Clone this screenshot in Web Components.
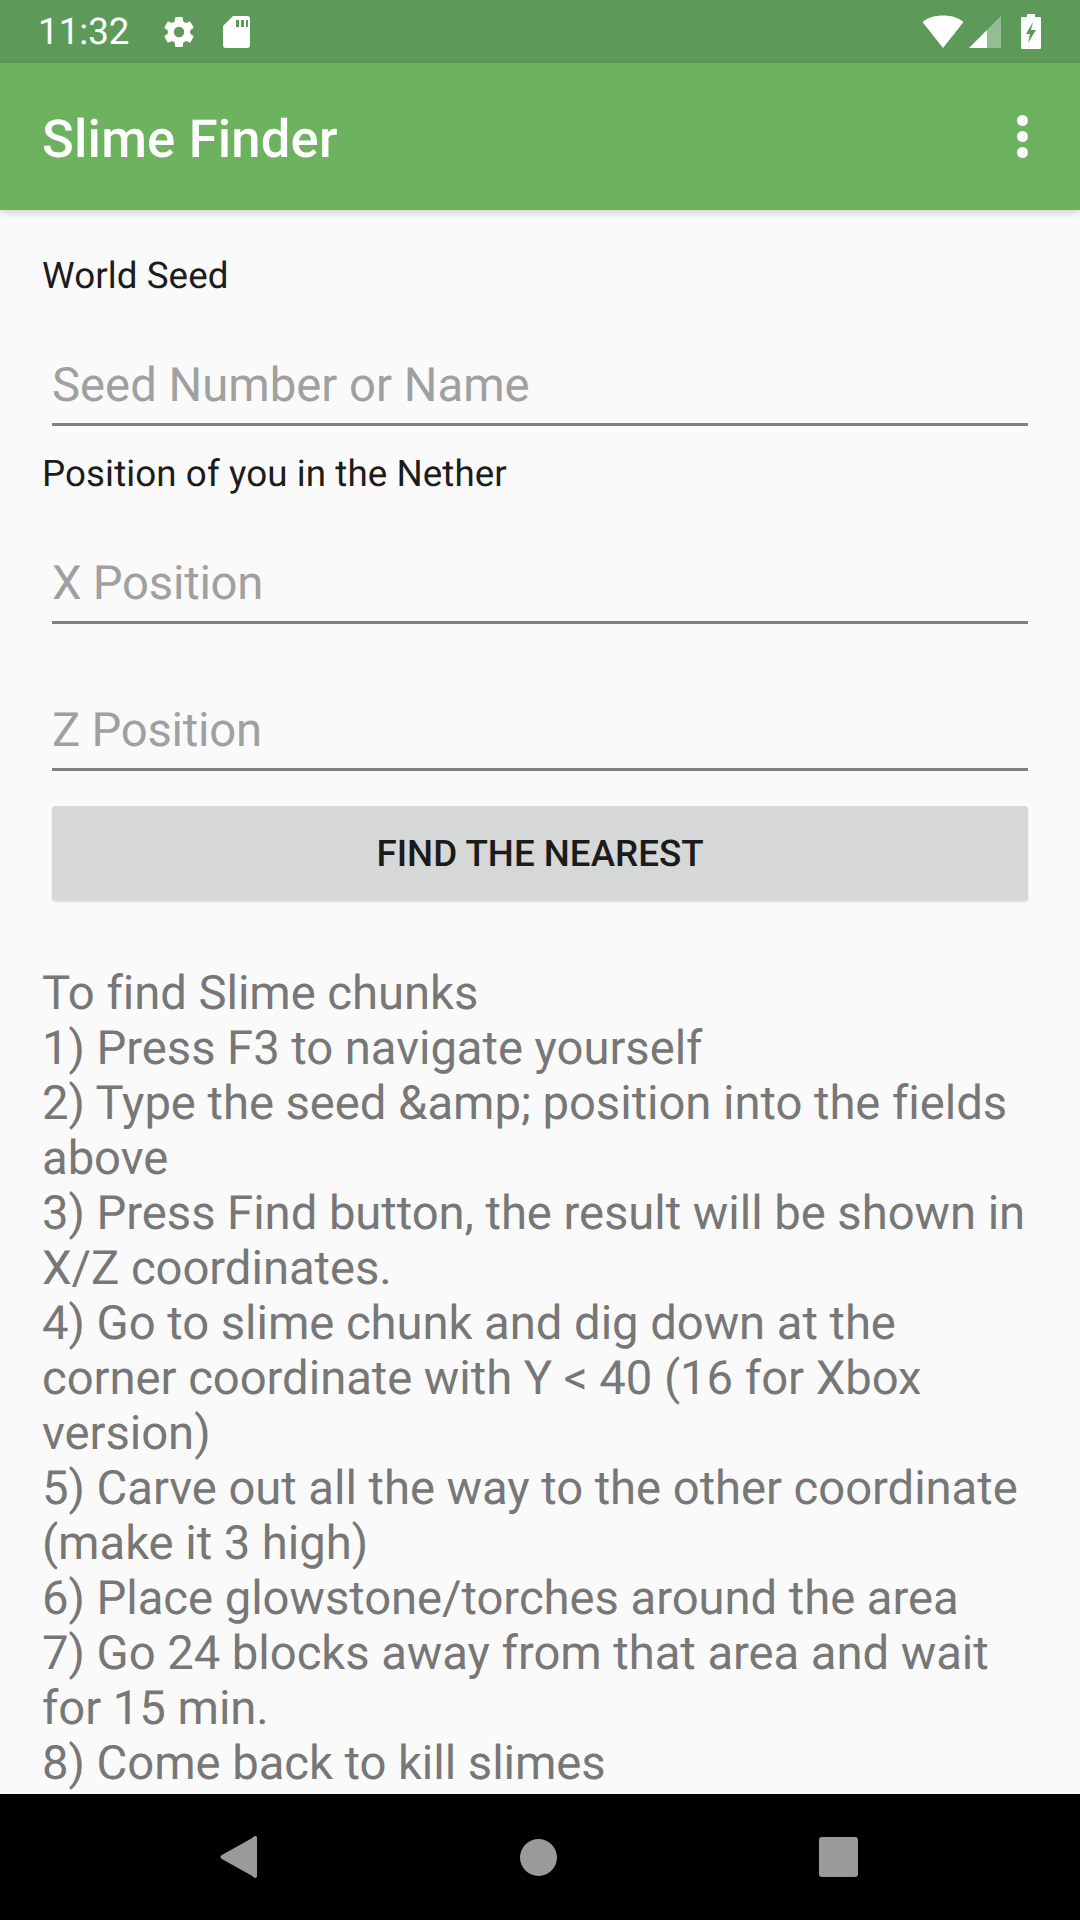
<!DOCTYPE html>
<html lang="en"><head><meta charset="utf-8"><title>Slime Finder</title>
<style>
html,body{margin:0;height:100%;overflow:hidden}
body{width:1080px;height:1920px;display:flex;flex-direction:column;font-family:Roboto,"Liberation Sans",sans-serif;background:#fafafa;text-rendering:geometricPrecision}
</style></head><body>
<status-bar></status-bar>
<app-bar title="Slime Finder"></app-bar>
<main-panel>
  <field-label style="padding-top:44px">World Seed</field-label>
  <text-field style="margin-top:24px" hint="Seed Number or Name"></text-field>
  <field-label style="padding-top:26px">Position of you in the Nether</field-label>
  <text-field style="margin-top:24px;letter-spacing:-.25px" hint="X Position"></text-field>
  <text-field style="margin-top:42px;letter-spacing:-.25px" hint="Z Position"></text-field>
  <action-button style="margin-top:35px">FIND THE NEAREST</action-button>
  <help-text style="margin-top:65px">To find Slime chunks
1) Press F3 to navigate yourself
2) Type the seed &amp;amp; position into the fields above
3) Press Find button, the result will be shown in X/Z coordinates.
4) Go to slime chunk and dig down at the corner coordinate with Y &lt; 40 (16 for Xbox version)
5) Carve out all the way to the other coordinate (make it 3 high)
6) Place glowstone/torches around the area
7) Go 24 blocks away from that area and wait for 15 min.
8) Come back to kill slimes</help-text>
</main-panel>
<nav-bar></nav-bar>
<script>
function def(name, html){
  customElements.define(name, class extends HTMLElement{
    constructor(){super();this.attachShadow({mode:'open'}).innerHTML=html(this);}
    connectedCallback(){
      const t=this.getAttribute('title'),h=this.getAttribute('hint');
      const a=this.shadowRoot.querySelector('[data-t]');
      if(a)a.textContent=t||h||'';
    }
  });
}
def('status-bar',()=>`<style>
:host{display:flex;align-items:center;height:63px;flex:none;background:#5d9a5a;color:#fff;box-sizing:border-box;padding:0 39px 0 38px;font:400 36.75px Roboto,sans-serif}
span{width:123px;line-height:63px;white-space:nowrap}
svg{display:block;fill:#fff}
.sp{flex:1}
</style><span>11:32</span>
<svg width="36" height="36" viewBox="0 0 24 24"><path d="M19.4 13c.04-.3.1-.65.1-1s-.03-.68-.1-1l2.1-1.65c.2-.15.25-.42.13-.64l-2-3.46c-.12-.22-.39-.3-.61-.22l-2.49 1c-.52-.4-1.08-.73-1.69-.98l-.38-2.65C14.46 2.18 14.25 2 14 2h-4c-.25 0-.46.18-.5.42l-.38 2.65c-.61.25-1.17.59-1.69.98l-2.49-1c-.23-.09-.49 0-.61.22l-2 3.46c-.13.22-.07.49.12.64L4.57 11c-.04.32-.07.65-.07 1s.03.68.07 1l-2.11 1.65c-.19.15-.24.42-.12.64l2 3.46c.12.22.39.3.61.22l2.49-1c.52.4 1.08.73 1.69.98l.38 2.65c.04.24.25.42.5.42h4c.25 0 .46-.18.5-.42l.38-2.65c.61-.25 1.17-.59 1.69-.98l2.49 1c.23.09.49 0 .61-.22l2-3.46c.12-.22.07-.49-.12-.64L19.4 13zM12 15.5A3.5 3.500 0 1 1 12 8.500a3.500 3.500 0 0 1 0 7z" fill-rule="evenodd"/></svg>
<svg width="30" height="34" viewBox="0 0 30 34" style="margin-left:24px"><path fill-rule="evenodd" d="M12 1h14c2 0 3 1 3 3v26c0 2-1 3-3 3H5c-2 0-3-1-3-3V11zM15 5v7h3V5zM20 5v7h3V5zM25 5v7h2V5z"/></svg>
<div class="sp"></div>
<svg width="42" height="33" viewBox="0 0 42 33"><path d="M21 33 .5 7C6 2.500 13 .5 21 .5S36 2.500 41.500 7z"/></svg>
<svg width="32" height="32" viewBox="0 0 32 32" style="margin-left:5px"><path d="M0 32 18 14v18z"/><path d="M18 14 32 0v32H18z" opacity=".35"/></svg>
<svg width="20" height="35" viewBox="0 0 20 35" style="margin-left:20px"><path fill-rule="evenodd" d="M6 0h8v3h5q1 0 1 1v30q0 1-1 1H1q-1 0-1-1V4q0-1 1-1h5zM12 8 5 20h4l-2 9 8-13h-5z"/></svg>`);
def('app-bar',()=>`<style>
:host{display:flex;align-items:center;justify-content:space-between;height:147px;flex:none;box-sizing:border-box;padding:5px 52px 0 42px;background:#6db25e;color:#fff;box-shadow:0 3px 8px rgba(0,0,0,.16);position:relative;z-index:1}
h1{margin:0;font:500 52.500px/1 Roboto,sans-serif;letter-spacing:.2px;white-space:nowrap}
.dots{display:flex;flex-direction:column;gap:5px;margin-top:-5px}
i{display:block;width:11px;height:11px;border-radius:50%;background:#fff}
</style><h1 data-t></h1><div class="dots"><i></i><i></i><i></i></div>`);
def('main-panel',()=>`<style>:host{display:block;flex:1;min-height:0;overflow:hidden;background:#fafafa}</style><slot></slot>`);
def('field-label',()=>`<style>:host{display:block;padding-left:42px;font:400 36.750px/43px Roboto,sans-serif;letter-spacing:.08px;color:#1c1c1c}</style><slot></slot>`);
def('text-field',()=>`<style>
:host{display:block;margin-left:52px;margin-right:52px;height:105px;box-sizing:border-box;border-bottom:3px solid #808080;font:400 47.250px/55px Roboto,sans-serif;color:#a0a0a0;padding-top:37px}
</style><div data-t></div>`);
def('action-button',()=>`<style>
:host{display:flex;align-items:center;justify-content:center;margin:0 52px;height:95px;border-radius:4px;background:#d6d7d7;box-shadow:0 1px 2px rgba(0,0,0,.12);color:#1b1b1b;font:500 36.750px Roboto,sans-serif}
</style><slot></slot>`);
def('help-text',()=>`<style>
:host{display:block;padding:0 42px;font:400 47.250px/55px Roboto,sans-serif;letter-spacing:-.06px;color:#777;white-space:pre-line}
</style><slot></slot>`);
def('nav-bar',()=>`<style>
:host{display:grid;grid-template-columns:repeat(3,300px);justify-content:center;align-items:center;height:126px;flex:none;box-sizing:border-box;padding-right:3px;background:#000}
div{display:flex;justify-content:center}
svg{display:block;fill:#9a9a9a}
</style>
<div><svg width="38" height="42" viewBox="0 0 40 44"><path d="M37 0c1.500 0 2 1 2 2v40c0 1-1 2-2 2-1 0-2-1-3-2L2 24c-2-1-2-3 0-4L34 2c1-1 2-2 3-2z"/></svg></div>
<div><svg width="37" height="37" viewBox="0 0 38 38"><circle cx="19" cy="19" r="19"/></svg></div>
<div><svg width="39" height="40" viewBox="0 0 39 40"><rect width="39" height="40" rx="3"/></svg></div>`);
</script>
</body></html>
